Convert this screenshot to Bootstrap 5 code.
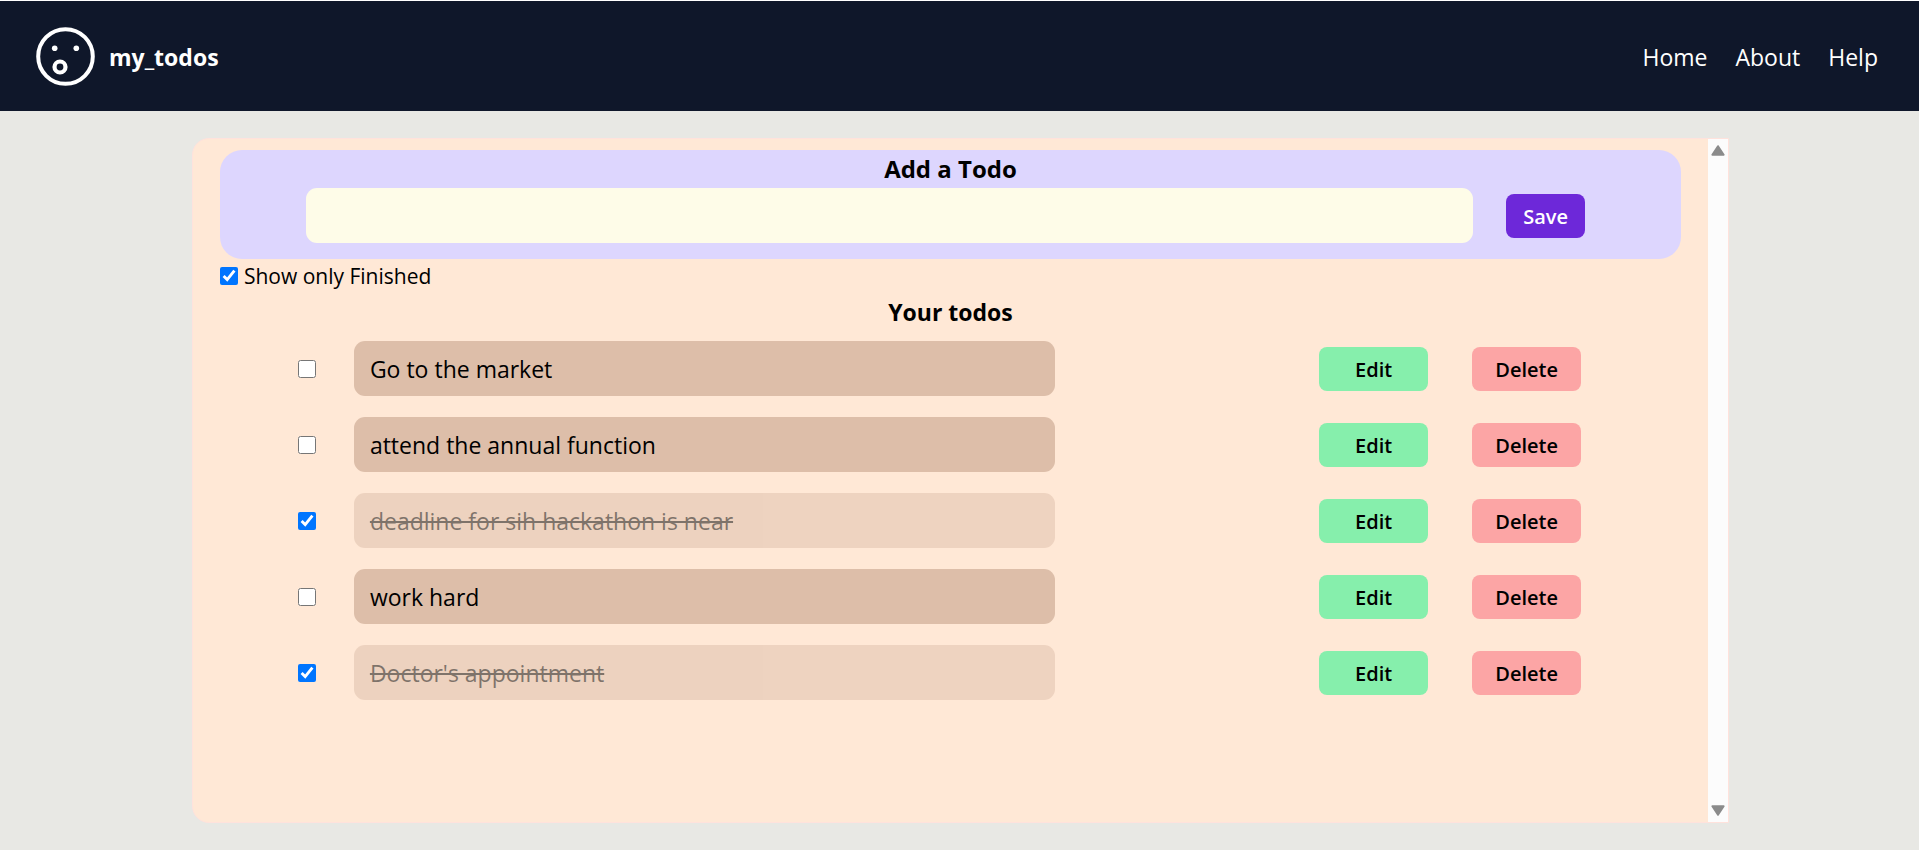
<!DOCTYPE html>
<html lang="en">
<head>
<meta charset="utf-8">
<meta name="viewport" content="width=device-width, initial-scale=1">
<title>my_todos</title>
<link href="https://cdn.jsdelivr.net/npm/bootstrap@5.3.0/dist/css/bootstrap.min.css" rel="stylesheet">
<style>
  body { background: #e8e8e4; color: #000; font-family: "Open Sans", "Noto Sans", sans-serif; font-size: 23px; line-height: 38px; }
  .site-bar { background: #0f172a; border-top: 1px solid #fff; height: 111px; padding: 0 41px 0 36px; color: #fff; }
  .site-bar a { color: #fff; text-decoration: none; }
  .brand-link { gap: 14px; font-weight: 700; }
  .brand-link span, .menu { padding-top: 2px; }
  .menu { gap: 28px; }
  .panel { box-sizing: content-box; width: 80%; min-height: calc(100vh - 167px); margin: 27px 0 27px 10%; background: #ffe8d6; border: 1px solid #ffe2dc; border-radius: 17px 0 0 17px; }
  .panel-body { padding: 11px 27px; }
  .add-box { background: #ddd6fe; border-radius: 22px; padding-bottom: 16px; }
  .title { font-size: 23px; line-height: 38px; font-weight: 700; margin: 0; text-align: center; }
  .add-box .title { font-size: 24px; }
  .add-row { padding: 0 96px 0 86px; gap: 33px; }
  .add-input { height: 55px; border: 0; border-radius: 11px; background: #fefce8; padding: 0 16px; min-width: 0; }
  .act { border: 0; border-radius: 8px; height: 44px; font-size: 20px; line-height: 28px; font-weight: 600; color: #000; padding: 2px 16px 0; }
  .act-save { background: #6d28d9; color: #fff; width: 79px; }
  .act-edit, .act-delete { width: 109px; }
  .act-edit { background: #86efac; }
  .act-delete { background: #fca5a5; }
  .tick { width: 18px; height: 18px; margin: 0; accent-color: #0075ff; flex: none; }
  .filter { gap: 6px; font-size: 21px; line-height: 34px; }
  .todos { gap: 21px; margin: 10px 0 0; padding: 0 100px 0 78px; }
  .todo-text { width: calc(55% - 5px); height: 55px; border-radius: 11px; background: #ddbea9; padding: 0 16px; line-height: 56px; margin-left: 38px; }
  .tick:checked + .todo-text { opacity: .5; text-decoration: line-through; }
  .actions { gap: 44px; }
  .scroll-track { width: 20px; background: #fcfcfc; padding: 6px 0; flex: none; }
</style>
</head>
<body>
<nav class="site-bar d-flex justify-content-between align-items-center">
  <a href="#" class="brand-link d-flex align-items-center">
    <svg width="59" height="59" viewBox="0 0 59 59" fill="none" stroke="#fff" aria-hidden="true">
      <circle cx="29.5" cy="29.5" r="27.3" stroke-width="4"/>
      <circle cx="24" cy="40" r="5.5" stroke-width="4.2"/>
      <circle cx="18.7" cy="21.3" r="2.8" fill="#fff" stroke="none"/>
      <circle cx="40.3" cy="21.3" r="2.8" fill="#fff" stroke="none"/>
    </svg>
    <span>my_todos</span>
  </a>
  <div class="menu d-flex">
    <a href="#">Home</a>
    <a href="#">About</a>
    <a href="#">Help</a>
  </div>
</nav>

<main class="panel d-flex">
  <div class="panel-body flex-grow-1">
    <form class="add-box">
      <h2 class="title"><label for="new-todo">Add a Todo</label></h2>
      <div class="add-row d-flex align-items-center">
        <input id="new-todo" type="text" class="add-input flex-grow-1">
        <button type="button" class="act act-save">Save</button>
      </div>
    </form>
    <div class="filter d-flex align-items-center">
      <input id="finished" type="checkbox" class="tick" checked>
      <label for="finished">Show only Finished</label>
    </div>
    <h2 class="title">Your todos</h2>
    <div class="todos d-flex flex-column">
      <div class="d-flex align-items-center">
        <input id="t1" type="checkbox" class="tick"><label for="t1" class="todo-text">Go to the market</label>
        <div class="actions d-flex ms-auto"><button type="button" class="act act-edit">Edit</button><button type="button" class="act act-delete">Delete</button></div>
      </div>
      <div class="d-flex align-items-center">
        <input id="t2" type="checkbox" class="tick"><label for="t2" class="todo-text">attend the annual function</label>
        <div class="actions d-flex ms-auto"><button type="button" class="act act-edit">Edit</button><button type="button" class="act act-delete">Delete</button></div>
      </div>
      <div class="d-flex align-items-center">
        <input id="t3" type="checkbox" class="tick" checked><label for="t3" class="todo-text">deadline for sih hackathon is near</label>
        <div class="actions d-flex ms-auto"><button type="button" class="act act-edit">Edit</button><button type="button" class="act act-delete">Delete</button></div>
      </div>
      <div class="d-flex align-items-center">
        <input id="t4" type="checkbox" class="tick"><label for="t4" class="todo-text">work hard</label>
        <div class="actions d-flex ms-auto"><button type="button" class="act act-edit">Edit</button><button type="button" class="act act-delete">Delete</button></div>
      </div>
      <div class="d-flex align-items-center">
        <input id="t5" type="checkbox" class="tick" checked><label for="t5" class="todo-text">Doctor's appointment</label>
        <div class="actions d-flex ms-auto"><button type="button" class="act act-edit">Edit</button><button type="button" class="act act-delete">Delete</button></div>
      </div>
    </div>
  </div>
  <div class="scroll-track d-flex flex-column justify-content-between align-items-center" aria-hidden="true">
    <svg width="14" height="11" viewBox="0 0 14 11"><path d="M7 1.2 12.6 9.7H1.4Z" fill="#8b8b8b" stroke="#8b8b8b" stroke-width="2" stroke-linejoin="round"/></svg>
    <svg width="14" height="11" viewBox="0 0 14 11"><path d="M7 9.8 12.6 1.3H1.4Z" fill="#8b8b8b" stroke="#8b8b8b" stroke-width="2" stroke-linejoin="round"/></svg>
  </div>
</main>
<script src="https://cdn.jsdelivr.net/npm/bootstrap@5.3.0/dist/js/bootstrap.bundle.min.js"></script>
</body>
</html>
